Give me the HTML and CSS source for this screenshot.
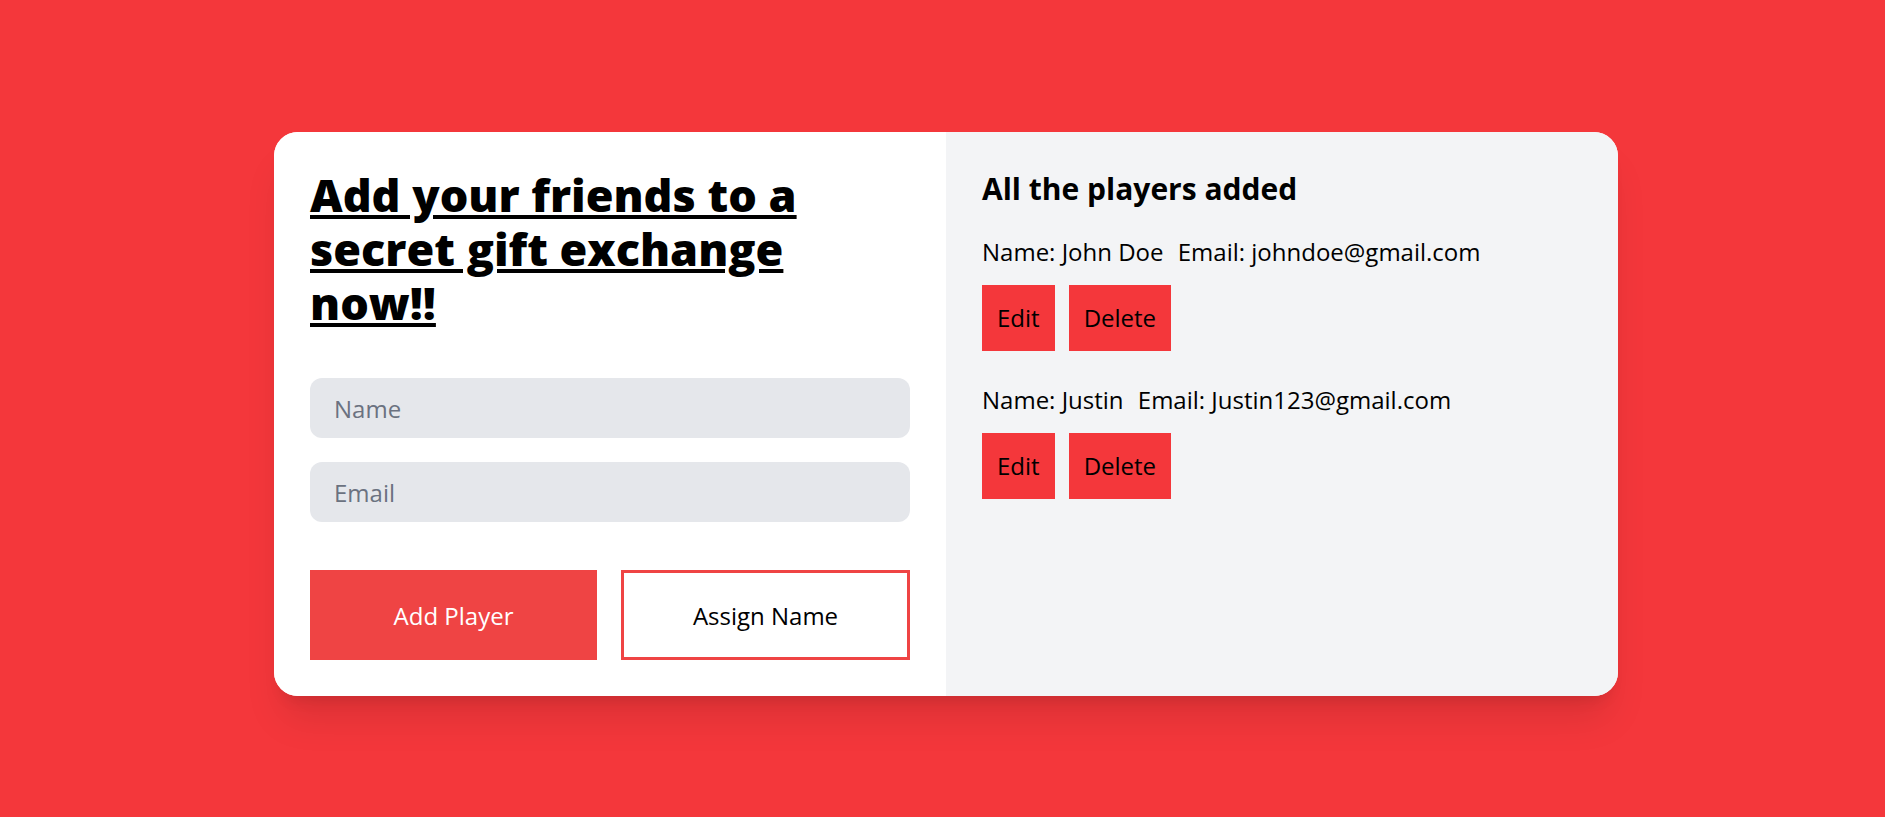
FILE: index.html
```html
<!DOCTYPE html>
<html lang="en">
<head>
<meta charset="utf-8">
<title>Secret Gift Exchange</title>
<link rel="stylesheet" href="styles.css">
</head>
<body>
<div class="page">
  <div class="card">
    <section class="form-panel">
      <h1 class="title">Add your friends to a secret gift exchange now!!</h1>
      <div class="fields">
        <input class="field" type="text" placeholder="Name">
        <input class="field" type="email" placeholder="Email">
      </div>
      <div class="actions">
        <button class="btn btn-primary">Add Player</button>
        <button class="btn btn-outline">Assign Name</button>
      </div>
    </section>
    <section class="list-panel">
      <h2 class="list-title">All the players added</h2>
      <div class="player">
        <p class="player-info"><span>Name: John Doe</span> <span class="email">Email: johndoe@gmail.com</span></p>
        <div class="player-actions">
          <button class="small-btn">Edit</button>
          <button class="small-btn">Delete</button>
        </div>
      </div>
      <div class="player">
        <p class="player-info"><span>Name: Justin</span> <span class="email">Email: Justin123@gmail.com</span></p>
        <div class="player-actions">
          <button class="small-btn">Edit</button>
          <button class="small-btn">Delete</button>
        </div>
      </div>
    </section>
  </div>
</div>
</body>
</html>
```

FILE: styles.css
```css
* { box-sizing: border-box; }
html, body { margin: 0; padding: 0; }
body {
  background: #f4373b;
  font-family: "Open Sans", "Liberation Sans", sans-serif;
  color: #000;
  min-height: 817px;
}
.page {
  display: flex;
  justify-content: center;
  padding: 132px 0 0 7px;
}
.card {
  width: 1344px;
  height: 564px;
  display: flex;
  border-radius: 24px;
  overflow: hidden;
  background: #fff;
  box-shadow: 0 30px 38px -8px rgba(0,0,0,0.1), 0 12px 15px -9px rgba(0,0,0,0.1);
}
.form-panel {
  width: 672px;
  background: #fff;
  padding: 36px;
  display: flex;
  flex-direction: column;
}
.title {
  margin: 0;
  font-size: 45px;
  line-height: 54px;
  font-weight: 800;
  text-decoration: underline;
  text-decoration-thickness: 4px;
  text-underline-offset: 3px;
}
.fields {
  margin-top: 48px;
  display: flex;
  flex-direction: column;
  gap: 24px;
}
.field {
  height: 60px;
  border: 0;
  border-radius: 12px;
  background: #e5e7eb;
  padding: 0 24px;
  font-family: inherit;
  font-size: 24px;
  color: #111;
  outline: none;
}
.field::placeholder { color: #6b7280; }
.actions {
  margin-top: 48px;
  display: grid;
  grid-template-columns: 287px 1fr;
  gap: 24px;
}
.btn {
  height: 90px;
  padding: 0;
  font-family: inherit;
  font-size: 24px;
  cursor: pointer;
}
.btn-primary {
  background: #ef4444;
  border: 0;
  color: #fff;
}
.btn-outline {
  background: #fff;
  border: 3px solid #ef4444;
  color: #000;
}
.list-panel {
  width: 672px;
  background: #f3f4f6;
  padding: 36px;
}
.list-title {
  margin: 0;
  font-size: 30px;
  line-height: 42px;
  font-weight: 700;
}
.player { margin-top: 24px; }
.player + .player { margin-top: 31px; }
.player-info {
  margin: 0;
  font-size: 24px;
  line-height: 36px;
}
.email { margin-left: 8px; }
.player-actions {
  margin-top: 15px;
  display: flex;
  gap: 14px;
}
.small-btn {
  background: #f4373b;
  border: 0;
  padding: 15px;
  font-family: inherit;
  font-size: 24px;
  line-height: 36px;
  color: #000;
  cursor: pointer;
}
```
